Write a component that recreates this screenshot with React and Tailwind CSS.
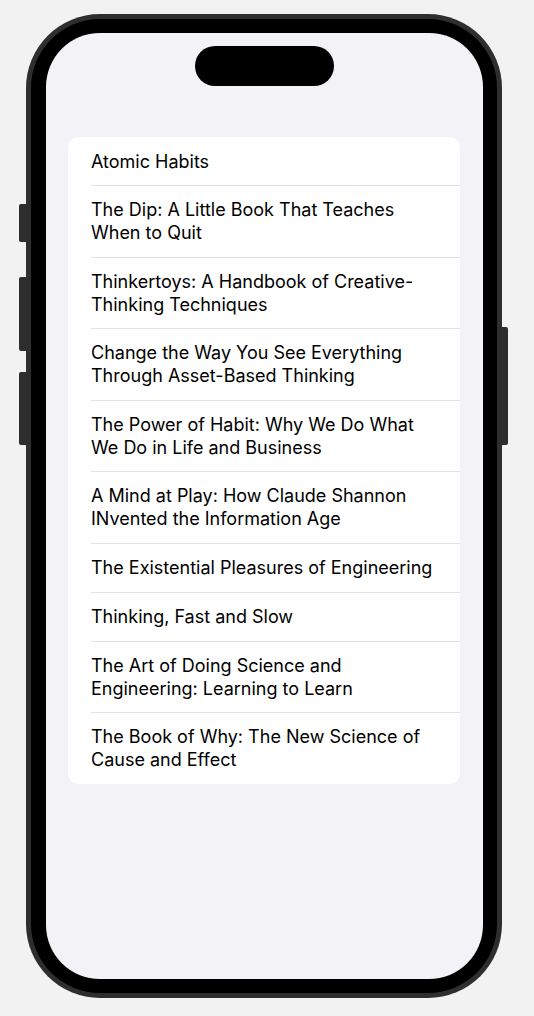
const BOOKS = [
  "Atomic Habits",
  "The Dip: A Little Book That Teaches When to Quit",
  "Thinkertoys: A Handbook of Creative-Thinking Techniques",
  "Change the Way You See Everything Through Asset-Based Thinking",
  "The Power of Habit: Why We Do What We Do in Life and Business",
  "A Mind at Play: How Claude Shannon INvented the Information Age",
  "The Existential Pleasures of Engineering",
  "Thinking, Fast and Slow",
  "The Art of Doing Science and Engineering: Learning to Learn",
  "The Book of Why: The New Science of Cause and Effect",
];

export default function App() {
  return (
    <div className="w-[534px] h-[1016px] bg-[#f2f2f2] pt-[14px] pl-[26px] overflow-hidden"
      style={{ fontFamily: "Inter, 'Liberation Sans', sans-serif" }}>
      <div className="relative w-[476px] h-[984px]">
        {/* side buttons */}
        <div className="absolute left-[-7px] top-[190px] w-[8px] h-[38px] rounded-l-[2px] bg-[#2e2e2e]" />
        <div className="absolute left-[-7px] top-[263px] w-[8px] h-[74px] rounded-l-[2px] bg-[#2e2e2e]" />
        <div className="absolute left-[-7px] top-[358px] w-[8px] h-[73px] rounded-l-[2px] bg-[#2e2e2e]" />
        <div className="absolute right-[-6px] top-[313px] w-[8px] h-[118px] rounded-r-[2px] bg-[#2e2e2e]" />

        <div className="relative w-full h-full rounded-[74px] bg-[#2e2e2e] p-[5px]">
          <div className="w-full h-full rounded-[69px] bg-black pt-[14px] pb-[14px] pl-[15px] pr-[14px]">
            <div className="w-full h-full rounded-[54px] bg-[#f2f2f7] flex flex-col items-center pt-[13px]">
              <div className="w-[139px] h-[40px] rounded-full bg-black shrink-0" />

              <div className="mt-[51px] ml-[-1px] w-[392px] bg-white rounded-[10px] overflow-hidden">
                {BOOKS.map((title, i) => (
                  <div key={title} className="pl-[23px]">
                    <div className={`min-h-[49px] flex items-center py-[12.25px] pr-[16px] text-[18px] leading-[23px] text-black
                      ${i < BOOKS.length - 1 ? "border-b border-[#e2e2e6]" : ""}`}>
                      {title}
                    </div>
                  </div>
                ))}
              </div>
            </div>
          </div>
        </div>
      </div>
    </div>
  );
}
